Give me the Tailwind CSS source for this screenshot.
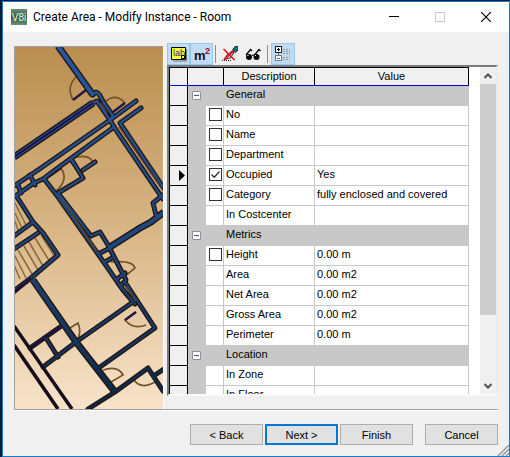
<!DOCTYPE html>
<html lang="en">
<head>
    <meta charset="UTF-8">
    <title>Create Area - Modify Instance - Room</title>
    <script src="https://cdn.jsdelivr.net/npm/@tailwindcss/browser@4"></script>
</head>
<body class="h-screen overflow-hidden bg-[#001a3c] pt-px pl-[2px] font-['Liberation_Sans',sans-serif] text-[11px] leading-[14px] text-black">
    <div class="relative flex h-full flex-col border border-[#1979ca] bg-[#f0f0f0]">
        <!-- Title bar -->
        <header class="flex h-[30px] shrink-0 items-center bg-white pl-2">
            <svg class="h-4 w-4" viewBox="0 0 16 16">
                <defs>
                    <linearGradient id="logo" x1="0" y1="0" x2="0" y2="1">
                        <stop offset="0" stop-color="#6f8f78"/>
                        <stop offset="0.5" stop-color="#2f5c3c"/>
                        <stop offset="1" stop-color="#6f8f78"/>
                    </linearGradient>
                </defs>
                <rect width="16" height="16" fill="url(#logo)"/>
                <text x="8" y="12" text-anchor="middle" class="text-[10px]" fill="#eef5ef">V8i</text>
            </svg>
            <h1 class="ml-[6px] flex-1 font-[Roboto,sans-serif] text-[12px]">Create Area - Modify Instance - Room</h1>
            <button class="flex h-full w-[46px] items-center justify-center" aria-label="Minimize">
                <svg class="h-[10px] w-[10px]" viewBox="0 0 10 10"><path d="M0 4.500h10" stroke="#000"/></svg>
            </button>
            <button class="flex h-full w-[46px] items-center justify-center" aria-label="Maximize" disabled>
                <svg class="h-[10px] w-[10px]" viewBox="0 0 10 10"><path d="M.5.5h9v9h-9z" fill="none" stroke="#c8c8c8"/></svg>
            </button>
            <button class="flex h-full w-[46px] items-center justify-center" aria-label="Close">
                <svg class="h-[10px] w-[10px]" viewBox="0 0 10 10"><path d="M0 0l10 10M10 0L0 10" stroke="#000" stroke-width="1.200"/></svg>
            </button>
        </header>

        <main class="flex min-h-0 flex-1 gap-[3px] px-[11px] pt-[11px]">
            <!-- Floor plan -->
            <div class="mt-[3px] w-[150px] shrink-0 border-t border-r border-l border-t-[#a0a0a0] border-r-white border-l-[#a0a0a0]">
                <svg class="h-full w-full" viewBox="0 0 148 362" preserveAspectRatio="none">
                    <defs>
                        <linearGradient id="sand" x1="0" y1="0" x2="0" y2="1">
                            <stop offset="0" stop-color="#ba8e50"/>
                            <stop offset="0.5" stop-color="#d8b585"/>
                            <stop offset="1" stop-color="#f8e3ca"/>
                        </linearGradient>
                        <linearGradient id="wall" gradientUnits="userSpaceOnUse" x1="0" y1="0" x2="0" y2="362">
                            <stop offset="0" stop-color="#2558a4"/>
                            <stop offset="0.6" stop-color="#1c437a"/>
                            <stop offset="1" stop-color="#0c2746"/>
                        </linearGradient>
                        <g id="walls" fill="none" stroke-linejoin="round" stroke-linecap="round">
                            <path d="M43-1L78 48L81 45L84 47L89 56L98 69L95 73L82 54L78 56"/>
                            <path d="M95 73L121 54M95 73L23 123L-1 139M99 80L40 123L28 132L19 136L-1 150"/>
                            <path d="M95 73L99 80L148 152M126 61L105 76L148 140"/>
                            <path d="M56 112L60 118L68 131L43 146M80 115L68 123M15 128L20 138M3 138L6 146"/>
                            <path d="M30 133L43 150L83 207L108 243L120 257M43 146L76 189L85 185L93 198L111 233L106 238M83 207L93 202"/>
                            <path d="M90 215L97 211M102 232L110 226"/>
                            <path d="M148 148L138 156L141 168"/>
                            <path d="M2 150L18 175L28 186L43 208L16 231L-1 244M18 175L-1 189M23 186L-1 202"/>
                            <path d="M103 236L118 255L61 295L28 320M110 235L140 281L85 320"/>
                            <path d="M15 301L45 280M31 291L43 310"/>
                            <path d="M73 362L100 345L133 321L148 344M140 328L149 322"/>
                        </g>
                        <g id="mainwalls" fill="none">
                            <path d="M43-1L78 48M78 56L-1 110M95 200L125 181L136 175L149 165"/>
                            <path d="M18 233L61 295L100 345"/>
                        </g>
                        <filter id="soft"><feGaussianBlur stdDeviation="0.600"/></filter>
                    </defs>
                    <rect width="148" height="362" fill="url(#sand)"/>
                    <g filter="url(#soft)">
                        <!-- Stairs -->
                        <g stroke="#8b6a3c" stroke-width="1.500">
                            <path d="M0 156l11 22M0 166l7 15M4 154l12 20M0 174l3 9M26 188l14 22M20 191l15 24M14 195l14 24M9 199l14 24M3 203l14 24M-1 207l12 24M-1 218l6 14"/>
                        </g>
                        <!-- Doors -->
                        <g fill="none" stroke="#76532a" stroke-width="1.700">
                            <path d="M61 30Q51 40 58 53M91 54Q101 46 110 56M58 111Q75 106 78 116M46 121Q54 133 41 144M96 215Q118 213 120 221L108 231M55 281L63 276Q67 286 62 293M121 265L110 273Q118 283 131 278M88 323Q103 318 108 328L96 335M119 333Q126 343 140 335"/>
                        </g>
                        <path d="M58 53L71 43M110 56L98 65M78 116L68 123M121 265L110 273M46 121L32 131" stroke="#28134a" stroke-width="2.500"/>
                        <use href="#walls" stroke="#21160f" stroke-width="5"/>
                        <use href="#mainwalls" stroke="#21160f" stroke-width="7"/>
                        <use href="#walls" stroke="url(#wall)" stroke-width="2.300"/>
                        <use href="#mainwalls" stroke="url(#wall)" stroke-width="4"/>
                        <path d="M78 56L-1 110M15 301L45 280M0 244L16 231" stroke="#1c0c48" stroke-width="1.700"/>
                        <path d="M86 56l6 10M104 80l44 64M46 151l36 53M111 240l10 14" stroke="#6d4526" stroke-width="1.300"/>
                        <path d="M-1 279L57 362M-1 298L43 362" stroke="#170d1a" stroke-width="3.500"/>
                        <path d="M-1 246L8 238" stroke="#1c0c30" stroke-width="3"/>
                    </g>
                </svg>
            </div>

            <div class="flex min-w-0 flex-1 flex-col pb-[13px]">
                <!-- Toolbar -->
                <div class="flex h-[22px] shrink-0 items-stretch">
                    <button class="flex w-[23px] items-center justify-center border border-[#90c8f6] bg-[#c0dcf3]" aria-label="Labels">
                        <svg class="h-4 w-4" viewBox="0 0 16 16">
                            <path d="M2 15h13.500V3" fill="none" stroke="#777"/>
                            <path d="M.5 1.500h14v12H.5z" fill="#ffff38" stroke="#000"/>
                            <text x="2" y="10" class="text-[9px]" fill="#17177c">lab</text>
                            <path d="M10.500 9.500h3v3h-3z" fill="#ffff38" stroke="#000"/>
                        </svg>
                    </button>
                    <button class="flex w-[23px] items-center justify-center border border-[#90c8f6] bg-[#c0dcf3]" aria-label="Units">
                        <svg class="h-4 w-4" viewBox="0 0 16 16">
                            <text x="0" y="14" class="text-[13px] font-bold" fill="#111">m</text>
                            <text x="11" y="8" class="text-[9px] font-bold" fill="#900d1c">2</text>
                        </svg>
                    </button>
                    <div class="mx-[2px] my-[2px] w-px bg-[#8d8d8d]"></div>
                    <button class="flex w-[23px] items-center justify-center" aria-label="Clear value">
                        <svg class="h-4 w-4" viewBox="0 0 16 16">
                            <path d="M2 13.500L5 9l5-4 2 2-4 5z" fill="#fff" stroke="#222"/>
                            <path d="M0 14.500h9" stroke="#222" stroke-dasharray="1 1"/>
                            <path d="M10.500 4L13 .5h3V4l-3 2.500z" fill="#08766f" stroke="#034"/>
                            <path d="M1.500 3l11 11M12 5L2 13.500" stroke="#e8131c" stroke-width="1.700"/>
                        </svg>
                    </button>
                    <button class="flex w-[23px] items-center justify-center" aria-label="View">
                        <svg class="h-4 w-4" viewBox="0 0 16 16">
                            <path d="M1 9L5.500 3.500 7 5M9.500 9L14 3.500 15.500 5M7 9.500q1-1 2.500 0" fill="none" stroke="#000" stroke-width="1.200"/>
                            <circle cx="4" cy="11" r="3" fill="#000"/>
                            <circle cx="11.500" cy="11" r="3" fill="#000"/>
                            <path d="M2.500 9.500h1M10 9.500h1" stroke="#fff"/>
                        </svg>
                    </button>
                    <div class="mx-[3px] my-[2px] w-px bg-[#8d8d8d]"></div>
                    <button class="flex w-[24px] items-center justify-center border border-[#90c8f6] bg-[#c0dcf3]" aria-label="Group by category">
                        <svg class="h-4 w-4" viewBox="0 0 16 16" fill="none" shape-rendering="crispEdges">
                            <path d="M.5.500h6v6h-6z" fill="#fff" stroke="#222"/>
                            <path d="M2 3.500h3M3.500 2v3" stroke="#000"/>
                            <path d="M.5 9.500h6v5h-6z" fill="#fff" stroke="#777"/>
                            <path d="M2 12.500h3M3.500 7v2" stroke="#666"/>
                            <path d="M8 3.500h7M8 5.500h7M8 7.500h7M8 11.500h7M8 13.500h7" stroke="#8b97a3" stroke-dasharray="2 1"/>
                        </svg>
                    </button>
                </div>

                <!-- Property grid -->
                <div class="flex min-h-0 flex-1 overflow-hidden border-2 border-t-[#7c7c7c] border-r-[#ececec] border-b-[#fafafa] border-l-[#7c7c7c] bg-white">
                    <div class="min-w-0 flex-1 overflow-hidden">
                        <table class="w-full table-fixed border-separate border-spacing-0">
                            <colgroup>
                                <col class="w-[19px]">
                                <col class="w-[18px]">
                                <col class="w-[18px]">
                                <col class="w-[91px]">
                                <col>
                            </colgroup>
                            <thead class="bg-[#f0f0f0]">
                                <tr class="h-[19px] *:border-t *:border-r *:border-b *:border-t-black *:border-r-black *:border-b-[#0000e0] *:p-0 *:pb-[2px] *:font-normal">
                                    <td class="border-l border-l-black"></td>
                                    <td colspan="2"></td>
                                    <th scope="col">Description</th>
                                    <th scope="col">Value</th>
                                </tr>
                            </thead>
                            <tbody id="rows"></tbody>
                        </table>
                    </div>
                    <!-- Scrollbar -->
                    <div class="ml-[11px] flex w-[16px] flex-col bg-[#f0f0f0]">
                        <button class="flex h-[17px] items-center justify-center" aria-label="Scroll up">
                            <svg class="h-[6px] w-[8px]" viewBox="0 0 8 6"><path d="M.5 5L4 1.500 7.500 5" fill="none" stroke="#505050" stroke-width="2"/></svg>
                        </button>
                        <div class="flex-1"><div class="h-[79%] bg-[#cdcdcd]"></div></div>
                        <button class="flex h-[17px] items-center justify-center" aria-label="Scroll down">
                            <svg class="h-[6px] w-[8px]" viewBox="0 0 8 6"><path d="M.5 1L4 4.500 7.500 1" fill="none" stroke="#505050" stroke-width="2"/></svg>
                        </button>
                    </div>
                </div>
            </div>
        </main>

        <!-- Wizard buttons -->
        <footer class="mx-[11px] flex h-[47px] shrink-0 justify-end gap-[2px] border-t border-[#a0a0a0] pt-[14px] shadow-[inset_0_1px_0_#fff]">
            <button class="h-[21px] w-[73px] border border-[#adadad] bg-[#e1e1e1]">&lt; Back</button>
            <button class="h-[21px] w-[73px] border-2 border-[#0078d7] bg-[#e1e1e1]">Next &gt;</button>
            <button class="h-[21px] w-[73px] border border-[#adadad] bg-[#e1e1e1]">Finish</button>
            <button class="ml-[10px] h-[21px] w-[73px] border border-[#adadad] bg-[#e1e1e1]">Cancel</button>
        </footer>
        <svg class="absolute right-0 bottom-0 h-3 w-3" viewBox="0 0 12 12"><path d="M1 12L12 1M5 12L12 5M9 12l3-3" stroke="#999" stroke-width="1.500"/></svg>
    </div>

    <script>
        const rows = [
            { group: 'General' },
            { name: 'No', checkable: true },
            { name: 'Name', checkable: true },
            { name: 'Department', checkable: true },
            { name: 'Occupied', value: 'Yes', checkable: true, checked: true, current: true },
            { name: 'Category', value: 'fully enclosed and covered', checkable: true },
            { name: 'In Costcenter' },
            { group: 'Metrics' },
            { name: 'Height', value: '0.00 m', checkable: true },
            { name: 'Area', value: '0.00 m2' },
            { name: 'Net Area', value: '0.00 m2' },
            { name: 'Gross Area', value: '0.00 m2' },
            { name: 'Perimeter', value: '0.00 m' },
            { group: 'Location' },
            { name: 'In Zone' },
            { name: 'In Floor' }
        ];

        const marker = '<svg class="ml-[9px] h-[11px] w-[6px]" viewBox="0 0 6 11"><path d="M0 0l6 5.500L0 11z"/></svg>';
        const rowHeader = (row) => `<td class="border-r border-b border-l border-black bg-[#f0f0f0] p-0">${row.current ? marker : ''}</td>`;

        function groupRow(row) {
            return `<tr class="h-5 bg-[#c8c8c8]">
                ${rowHeader(row)}
                <td class="p-0 pb-[2px]">
                    <button class="ml-1 block h-[9px] w-[9px] rounded-[1px] border border-[#8f8f8f] bg-white" aria-label="Collapse ${row.group}">
                        <span class="mx-px block h-px bg-[#3a5a9a]"></span>
                    </button>
                </td>
                <td class="p-0"></td>
                <td class="p-0 pb-1 pl-[2px]" colspan="2">${row.group}</td>
            </tr>`;
        }

        function checkbox(row) {
            return `<span class="relative ml-[3px] block h-[13px] w-[13px]">
                <input type="checkbox" id="check-${row.name}" class="block h-[13px] w-[13px] appearance-none border border-[#333] bg-white" ${row.checked ? 'checked' : ''}>
                ${row.checked ? '<svg class="pointer-events-none absolute inset-0" viewBox="0 0 13 13"><path d="M2.500 6.500L5.200 9.200 10.500 3.500" fill="none" stroke="#333" stroke-width="1.300"/></svg>' : ''}
            </span>`;
        }

        function propertyRow(row) {
            const label = row.checkable ? `<label for="check-${row.name}">${row.name}</label>` : row.name;
            return `<tr class="h-5">
                ${rowHeader(row)}
                <td class="bg-[#c8c8c8] p-0"></td>
                <td class="border-r border-b border-[#c8c8c8] p-0 pb-[2px]">${row.checkable ? checkbox(row) : ''}</td>
                <td class="border-r border-b border-[#c8c8c8] p-0 pb-1 pl-[2px]">${label}</td>
                <td class="border-r border-b border-[#c8c8c8] p-0 pb-1 pl-[2px]">${row.value || ''}</td>
            </tr>`;
        }

        document.getElementById('rows').innerHTML = rows.map((row) => row.group ? groupRow(row) : propertyRow(row)).join('');
    </script>
</body>
</html>
